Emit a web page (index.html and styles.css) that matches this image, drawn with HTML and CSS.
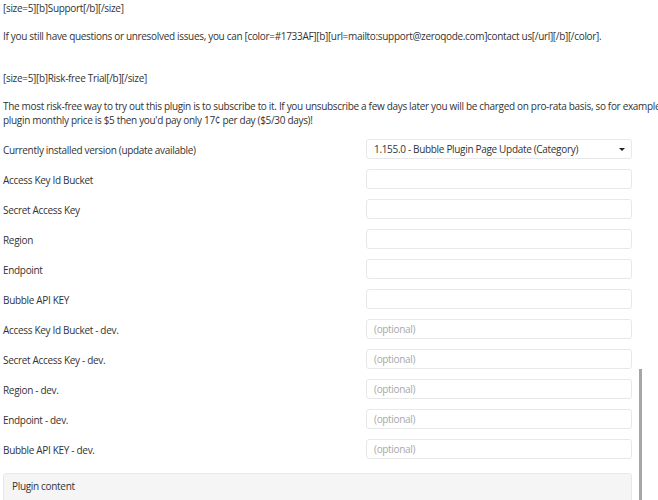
FILE: index.html
```html
<!DOCTYPE html>
<html lang="en">

<head>
    <meta charset="UTF-8">
    <title>Plugin settings</title>
    <link rel="stylesheet" href="styles.css">
</head>

<body>
    <div class="plugin-page">
        <div class="plugin-description">[size=5][b]Support[/b][/size]

If you still have questions or unresolved issues, you can [color=#1733AF][b][url=mailto:support@zeroqode.com]contact us[/url][/b][/color].


[size=5][b]Risk-free Trial[/b][/size]

The most risk-free way to try out this plugin is to subscribe to it. If you unsubscribe a few days later you will be charged on pro-rata basis, so for example if the
plugin monthly price is $5 then you'd pay only 17¢ per day ($5/30 days)!</div>

        <div class="plugin-settings">
            <div class="setting-row">
                <span class="setting-label">Currently installed version (update available)</span>
                <div class="setting-select">
                    <span>1.155.0 - Bubble Plugin Page Update (Category)</span>
                    <span class="select-caret"></span>
                </div>
            </div>
            <div class="setting-row">
                <span class="setting-label">Access Key Id Bucket</span>
                <input type="text" class="setting-input">
            </div>
            <div class="setting-row">
                <span class="setting-label">Secret Access Key</span>
                <input type="text" class="setting-input">
            </div>
            <div class="setting-row">
                <span class="setting-label">Region</span>
                <input type="text" class="setting-input">
            </div>
            <div class="setting-row">
                <span class="setting-label">Endpoint</span>
                <input type="text" class="setting-input">
            </div>
            <div class="setting-row">
                <span class="setting-label">Bubble API KEY</span>
                <input type="text" class="setting-input">
            </div>
            <div class="setting-row">
                <span class="setting-label">Access Key Id Bucket - dev.</span>
                <input type="text" class="setting-input" placeholder="(optional)">
            </div>
            <div class="setting-row">
                <span class="setting-label">Secret Access Key - dev.</span>
                <input type="text" class="setting-input" placeholder="(optional)">
            </div>
            <div class="setting-row">
                <span class="setting-label">Region - dev.</span>
                <input type="text" class="setting-input" placeholder="(optional)">
            </div>
            <div class="setting-row">
                <span class="setting-label">Endpoint - dev.</span>
                <input type="text" class="setting-input" placeholder="(optional)">
            </div>
            <div class="setting-row">
                <span class="setting-label">Bubble API KEY - dev.</span>
                <input type="text" class="setting-input" placeholder="(optional)">
            </div>
        </div>

        <div class="plugin-content">
            <div class="plugin-content-title">Plugin content</div>
        </div>
    </div>

    <div class="scroll-thumb"></div>
</body>

</html>
```

FILE: styles.css
```css
html,
body {
    margin: 0;
    overflow: hidden;
}

body {
    font-family: 'Open Sans', 'Liberation Sans', sans-serif;
    font-size: 10px;
    letter-spacing: -0.32px;
    color: #333;
    background-color: white;
}

.plugin-page {
    width: 629px;
    padding: 1px 0 0 3px;
}

.plugin-description {
    white-space: pre;
    line-height: 14px;
    width: 655px;
    overflow: hidden;
}

.plugin-settings {
    margin-top: 12px;
    display: flex;
    flex-direction: column;
    gap: 10px;
}

.setting-row {
    display: flex;
    align-items: center;
    height: 20px;
}

.setting-label {
    width: 363px;
    flex-shrink: 0;
    padding-top: 1px;
}

.setting-input,
.setting-select {
    box-sizing: border-box;
    width: 266px;
    height: 20px;
    margin: 0;
    padding: 0 7px;
    border: 1px solid #e8e8e8;
    border-radius: 3px;
    font-family: inherit;
    font-size: 10px;
    letter-spacing: -0.32px;
    color: #333;
    background-color: white;
    outline: none;
}

.setting-input::placeholder {
    color: #a8a8a8;
}

.setting-select {
    display: flex;
    align-items: center;
    justify-content: space-between;
    padding-right: 6px;
}

.select-caret {
    width: 0;
    height: 0;
    border-left: 3px solid transparent;
    border-right: 3px solid transparent;
    border-top: 3px solid #222;
}

.plugin-content {
    margin-top: 14px;
    box-sizing: border-box;
    width: 629px;
    height: 40px;
    border: 1px solid #e8e8e8;
    border-radius: 3px;
    background-color: #f5f5f5;
    padding: 5px 8px;
}

.plugin-content-title {
    line-height: 14px;
}

.scroll-thumb {
    position: absolute;
    left: 639px;
    top: 369px;
    width: 3px;
    height: 140px;
    background-color: #a6a6a6;
}
```
